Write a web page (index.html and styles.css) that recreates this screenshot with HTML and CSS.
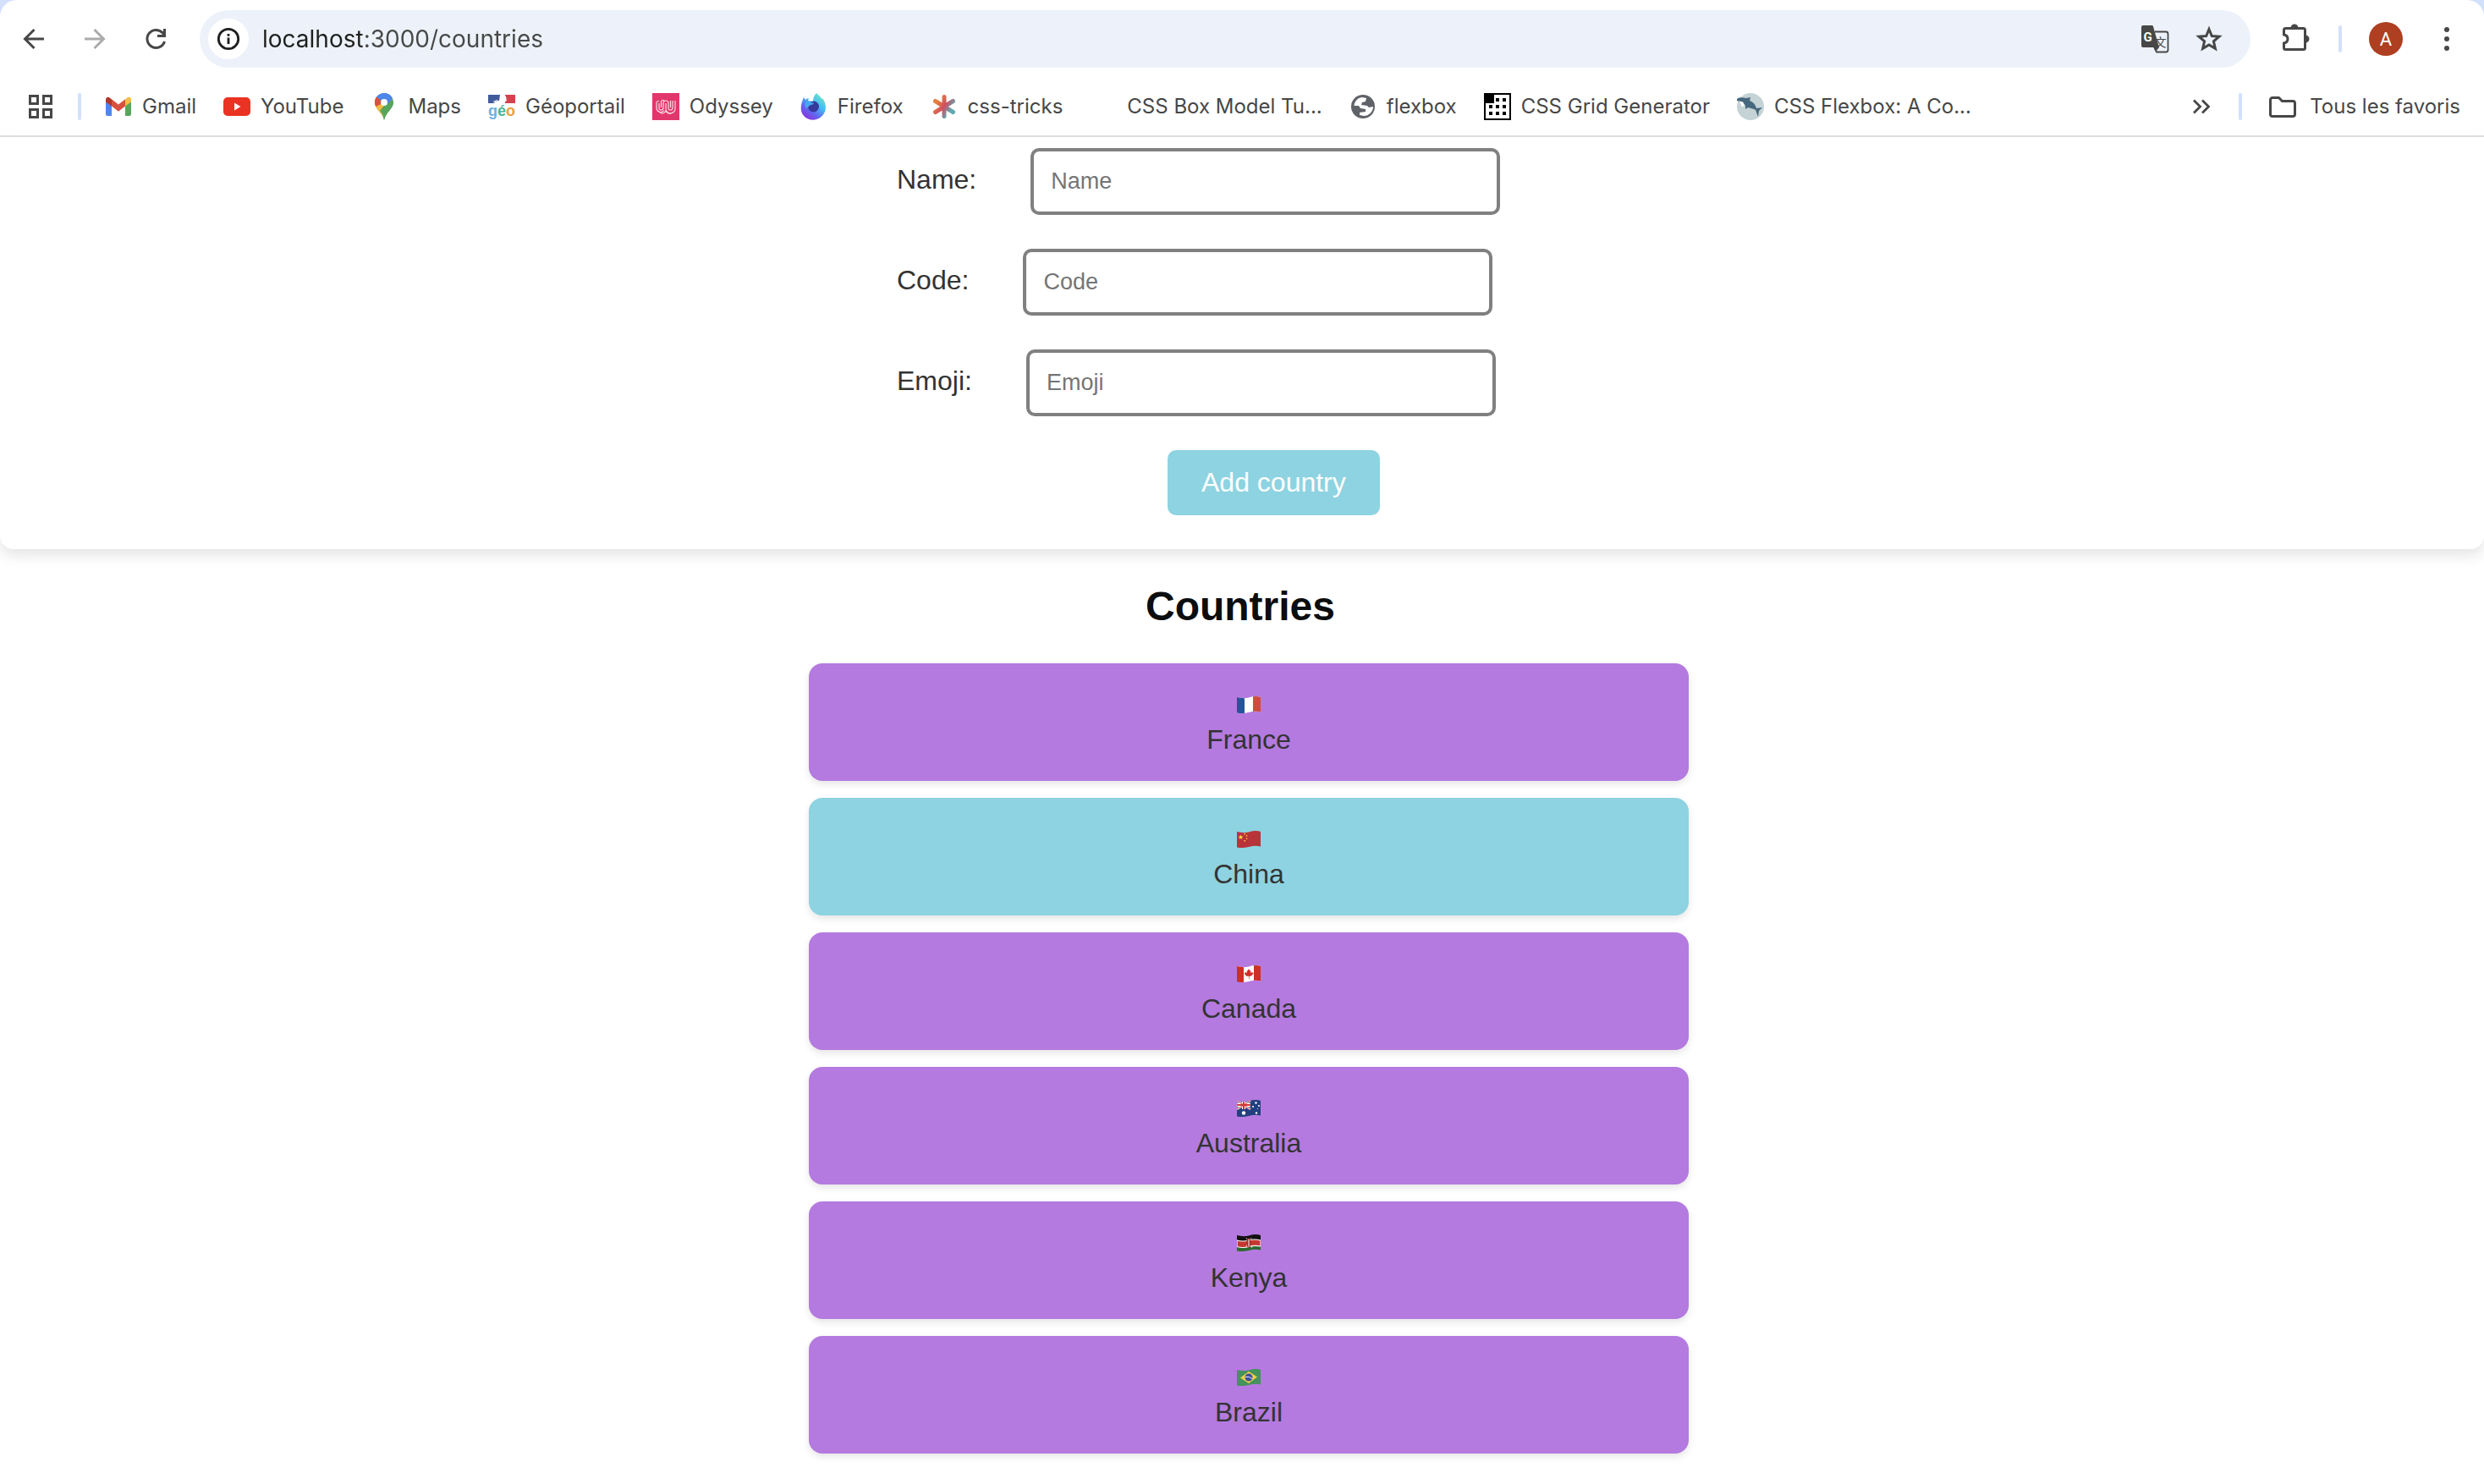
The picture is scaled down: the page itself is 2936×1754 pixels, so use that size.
FILE: index.html
```html
<!DOCTYPE html>
<html lang="fr">
<head>
<meta charset="utf-8">
<title>Countries</title>
<link rel="stylesheet" href="styles.css">
</head>
<body>
<header class="chrome">
  <div class="chrome-inner">
    <div class="toolbar">
      <button class="tool" aria-label="Back"><svg width="40" height="40" viewBox="0 0 40 40" fill="none" stroke="#474747" stroke-width="3"><path d="M32 20H10M20.500 9 9.500 20l11 11"/></svg></button>
      <button class="tool" aria-label="Forward" disabled><svg width="40" height="40" viewBox="0 0 40 40" fill="none" stroke="#ababab" stroke-width="3"><path d="M8 20h22M19.500 9l11 11-11 11"/></svg></button>
      <button class="tool" aria-label="Reload"><svg width="40" height="40" viewBox="0 0 40 40" fill="none" stroke="#474747" stroke-width="3"><path d="M30.500 23A10.500 10.500 0 1 1 28 12.600L30.500 15.500"/><path d="M30.500 8v8.500H22"/></svg></button>
      <div class="omnibox">
        <button class="site-info" aria-label="Site information"><svg width="28" height="28" viewBox="0 0 28 28" fill="none" stroke="#1f1f1f" stroke-width="2.800"><circle cx="14" cy="14" r="11.700"/><path d="M14 12.500v7.500M14 8v2.800"/></svg></button>
        <input class="url" type="text" aria-label="Address" value="localhost:3000/countries">
        <button class="pill-tool" aria-label="Translate"><svg width="34" height="34" viewBox="0 0 34 34"><path d="M17 8.500h13a2.500 2.500 0 0 1 2.500 2.500v19a2.500 2.500 0 0 1-2.500 2.500H19l-3-6" fill="none" stroke="#474747" stroke-width="1.800"/><path d="M3 1h10.500a1.500 1.500 0 0 1 1.500 1.200L22 27l-4 5-2-5H3a2 2 0 0 1-2-2V3a2 2 0 0 1 2-2z" fill="#474747"/><text x="8.500" y="20" class="glyph-g">G</text><text x="23.500" y="26" class="glyph-han">文</text></svg></button>
        <button class="pill-tool" aria-label="Bookmark this page"><svg width="34" height="34" viewBox="0 0 34 34" fill="none" stroke="#474747" stroke-width="3"><path d="M17 5.500l3.300 8 8.700.7-6.600 5.700 2 8.500L17 23.900l-7.400 4.500 2-8.500L5 14.200l8.700-.7z"/></svg></button>
      </div>
      <button class="tool" aria-label="Extensions"><svg width="40" height="40" viewBox="0 0 40 40"><path d="M9.500 7.500h21a2 2 0 0 1 2 2v21a2 2 0 0 1-2 2h-21a2 2 0 0 1-2-2V25c6-1 6-9 0-10V9.500a2 2 0 0 1 2-2z" fill="none" stroke="#474747" stroke-width="3"/><path d="M15.500 7a4.500 4.500 0 0 1 9 0zM33 15.500a4.500 4.500 0 0 1 0 9z" fill="#474747"/></svg></button>
      <span class="divider"></span>
      <button class="avatar" aria-label="Profile">A</button>
      <button class="tool" aria-label="Menu"><svg width="40" height="40" viewBox="0 0 40 40" fill="#474747"><circle cx="20" cy="9" r="3"/><circle cx="20" cy="20" r="3"/><circle cx="20" cy="31" r="3"/></svg></button>
    </div>
    <nav class="bookmarks" aria-label="Bookmarks">
      <button class="apps" aria-label="Applications"><svg width="28" height="28" viewBox="0 0 28 28" fill="none" stroke="#474747" stroke-width="3"><path d="M1.500 1.500h9v9h-9zM17.500 1.500h9v9h-9zM1.500 17.500h9v9h-9zM17.500 17.500h9v9h-9z"/></svg></button>
      <span class="divider"></span>
      <div class="links">
        <a href="#"><svg width="32" height="32" viewBox="0 0 32 32"><path d="M1 9v16a2 2 0 0 0 2 2h5V14z" fill="#4f86ec"/><path d="M31 9v16a2 2 0 0 1-2 2h-5V14z" fill="#58a55c"/><path d="M24 7.500v8l7-5V8c0-3-3-4-5-2.300z" fill="#f2bd42"/><path d="M8 7.500v8l-7-5V8c0-3 3-4 5-2.300z" fill="#b4352b"/><path d="M8 7.300l8 6.200 8-6.200v8.200l-8 6.200-8-6.200z" fill="#d85140"/></svg>Gmail</a>
        <a href="#"><svg width="32" height="32" viewBox="0 0 32 32"><rect y="5" width="32" height="22" rx="5" fill="#ea3323"/><path d="M13 11.500v9l7.500-4.500z" fill="#fff"/></svg>YouTube</a>
        <a href="#"><svg width="32" height="32" viewBox="0 0 32 32"><path d="M16 0c6 0 11 5 11 11 0 8-8.500 10-11 21-1-9-11-12-11-21C5 5 10 0 16 0z" fill="#58a55c"/><path d="M5.300 13C7 21 13 23 15 29l11-20-5-8z" fill="#f2bd42"/><path d="M27 10c0 9-8 11-11 22-.600-5-2.500-8-5-11L23 6z" fill="#58a55c"/><path d="M7 4.500C3.500 9 5 14 6.500 16L16 11z" fill="#d85140"/><path d="M7 4.500C12-2 23-1.500 26 6.500L20 13l-6-3z" fill="#4f86ec"/><circle cx="16" cy="11" r="4" fill="#fff"/></svg>Maps</a>
        <a href="#"><svg width="32" height="32" viewBox="0 0 32 32"><path d="M0 2h14v10H0z" fill="#415a9b"/><path d="M20 2h12v10H19z" fill="#d3434e"/><path d="M14 2h5c3 2 2 4 3 7l-2 1v2H7l1-2 5-1z" fill="#fff"/><path d="M6 10.500l4-2 2 1" fill="none" stroke="#fff"/><text x="0" y="27" class="glyph-geo"><tspan fill="#6fb1e0">g</tspan><tspan fill="#4db39a">é</tspan><tspan fill="#eba13c">o</tspan></text></svg>Géoportail</a>
        <a href="#"><svg width="32" height="32" viewBox="0 0 32 32" fill="none"><path d="M0 0h32v32H0z" fill="#e2376c"/><g stroke="#fbd9e4" stroke-width="1.200"><path d="M8 9.500H7a2 2 0 0 0-2 2V18a5 5 0 0 0 9 2.500"/><path d="M8 12v5.500a2.500 2.500 0 0 0 5 0V12a3 3 0 0 1 6 0v5.500a2.500 2.500 0 0 0 5 0V9"/><path d="M10.500 17v-6a2 2 0 0 1 4-1M16 12v6.500a5.500 5.500 0 0 0 11 0V9M21.500 17V9"/><path d="M9 23.500c3 1 6 0 7-2.500 2 4 7 4 9 1"/></g></svg>Odyssey</a>
        <a href="#"><svg width="32" height="32" viewBox="0 0 32 32"><defs><linearGradient id="fx" x1="1" y1="0" x2=".3" y2="1"><stop offset="0" stop-color="#80f5b5"/><stop offset=".45" stop-color="#43bdf5"/><stop offset=".75" stop-color="#6464f0"/><stop offset="1" stop-color="#8a35dd"/></linearGradient></defs><path d="M19 0c3 3 5 4 6 7l1-1c4 5 5 11 3 16-5 12-21 13-27 2C-1 17 2 10 4 5l2 3c1-1 2-2 4-2l-1 3 6 1c0-4 1-7 4-10z" fill="url(#fx)"/><circle cx="15.500" cy="16" r="6.500" fill="#37389b"/><path d="M6 11c4-2 7 0 10 1-2 3-5 1-6 4l-4 2z" fill="#43aaf2"/></svg>Firefox</a>
        <a href="#"><svg width="32" height="32" viewBox="0 0 32 32"><defs><linearGradient id="ct" gradientUnits="userSpaceOnUse" x1="3" y1="8" x2="29" y2="24"><stop offset=".15" stop-color="#e9803c"/><stop offset=".5" stop-color="#d04e62"/><stop offset=".8" stop-color="#5fa9b5"/></linearGradient></defs><path d="M16 4.500v23M5.500 9.500l21 13M26.500 9.500l-21 13" stroke="url(#ct)" stroke-width="5" stroke-linecap="round"/></svg>css-tricks</a>
        <a href="#"><svg width="32" height="32" viewBox="0 0 32 32"></svg>CSS Box Model Tu...</a>
        <a href="#"><svg width="32" height="32" viewBox="0 0 32 32"><circle cx="16" cy="16" r="14" fill="#5f6368"/><path d="M15 5l5 1-1 4-4 1-1 3 7 1 2 2 5-1c0 6-5 11-11 11l-5-1v-3l7-1v-3l-6-1-2-3H5.500C6 9 11 5 15 5z" fill="#fff"/></svg>flexbox</a>
        <a href="#"><svg width="32" height="32" viewBox="0 0 32 32"><path d="M1 1h30v30H1z" fill="#fff" stroke="#000" stroke-width="2"/><path d="M0 0h12v12H0zM14 6h4v4h-4zM22 6h4v4h-4zM6 14h4v4H6zM14 14h4v4h-4zM22 14h4v4h-4zM6 22h4v4H6zM14 22h4v4h-4zM22 22h4v4h-4z"/></svg>CSS Grid Generator</a>
        <a href="#"><svg width="32" height="32" viewBox="0 0 32 32"><circle cx="16" cy="16" r="16" fill="#c5d3d6"/><path d="M0 7c2-2 6-2 11-1l5-1-1 4c5 2 7 5 8 9l7-1-4 4-1 7-3-8c-4-2-6-2-9-3l-3 2 0-4-3-4-7-2z" fill="#46687f"/><path d="M3 9.500l4 1 2 4-3 2z" fill="#fff"/></svg>CSS Flexbox: A Co...</a>
      </div>
      <button class="more" aria-label="More bookmarks"><svg width="20" height="20" viewBox="0 0 20 20" fill="none" stroke="#474747" stroke-width="2.800"><path d="M1 2.500l7.500 7.500L1 17.500M11 2.500l7.500 7.500-7.500 7.500"/></svg></button>
      <span class="divider"></span>
      <a class="all" href="#"><svg width="32" height="32" viewBox="0 0 32 32" fill="none" stroke="#474747" stroke-width="3"><path d="M4 5.500h7.500l4 4H28a2.500 2.500 0 0 1 2.500 2.500v13a2.500 2.500 0 0 1-2.500 2.500H4A2.500 2.500 0 0 1 1.500 25V8A2.500 2.500 0 0 1 4 5.500z"/></svg>Tous les favoris</a>
    </nav>
  </div>
</header>
<main>
  <section class="panel">
    <form class="form">
      <div class="row"><label for="name">Name:</label><input id="name" type="text" placeholder="Name"></div>
      <div class="row"><label for="code">Code:</label><input id="code" type="text" placeholder="Code"></div>
      <div class="row"><label for="emoji">Emoji:</label><input id="emoji" type="text" placeholder="Emoji"></div>
      <button class="submit" type="submit">Add country</button>
    </form>
  </section>
  <h2>Countries</h2>
  <ul class="countries">
    <li><svg class="flag" width="28" height="20" viewBox="0 0 28 20"><path d="M0 0h28v20H0z" fill="#fff"/><path d="M0 0h9v20H0z" fill="#24549a"/><path d="M19 0h9v20h-9z" fill="#d24b3b"/></svg>France</li>
    <li class="selected"><svg class="flag" width="28" height="20" viewBox="0 0 28 20"><path d="M0 0h28v20H0z" fill="#b8333a"/><path d="M4.500 4.500l.8 2 2.200.1-1.700 1.300.6 2.100-1.900-1.200L2.600 10l.6-2.100-1.700-1.300 2.200-.1z" fill="#f7dc3d"/><path d="M8.500 3h1.500v1.500H8.500zM11 5h1.200v1.500H11zM11 8.500h1.200V10H11zM8.500 11H10v1.500H8.500z" fill="#f7dc3d"/></svg>China</li>
    <li><svg class="flag" width="28" height="20" viewBox="0 0 28 20"><path d="M0 0h28v20H0z" fill="#fff"/><path d="M0 0h8v20H0zM20 0h8v20h-8z" fill="#d02f22"/><path d="M14 4l1.500 2.500 1-.3-.2 3 2-1.500.3 1.300 1.200.5-3.300 3.300h-2l.1 3.500h-.7v-3.500h-2.600L8.500 9.500l1.200-.5.3-1.300 2 1.500-.4-3 1 .3z" fill="#d02f22"/></svg>Canada</li>
    <li><svg class="flag" width="28" height="20" viewBox="0 0 28 20"><path d="M0 0h28v20H0z" fill="#233f7f"/><path d="M0 1l16 10M16 1L0 11" stroke="#fff" stroke-width="2.500"/><path d="M8 0v11M0 6h16" stroke="#fff" stroke-width="4"/><path d="M0 1l16 10M16 1L0 11" stroke="#cf3a3a"/><path d="M8 0v11M0 6h16" stroke="#cf3a3a" stroke-width="2"/><g fill="#fff"><circle cx="8" cy="15.500" r="2.200"/><circle cx="22.500" cy="3.500" r="1.200"/><circle cx="19" cy="8" r="1.100"/><circle cx="26" cy="7" r="1.100"/><circle cx="23" cy="15.500" r="1.200"/><circle cx="24.500" cy="10.500" r=".6"/></g></svg>Australia</li>
    <li><svg class="flag" width="28" height="20" viewBox="0 0 28 20"><path d="M0 0h28v8H0z" fill="#111"/><path d="M0 14h28v6H0z" fill="#2c6b2f"/><path d="M0 7q7 2 14 0t14 0v7q-7-1.500-14 .5T0 14.500z" fill="#c5372f" stroke="#fff" stroke-width="1.200"/><path d="M11 4l7 12M17 4l-7 12" stroke="#ddd" stroke-width=".8"/><ellipse cx="14" cy="10" rx="2.600" ry="5.500" fill="#a82c27"/><path d="M14 5.500v9" stroke="#fff"/></svg>Kenya</li>
    <li><svg class="flag" width="28" height="20" viewBox="0 0 28 20"><path d="M0 0h28v20H0z" fill="#43935a"/><path d="M4 10.500L14 3l10 6.500L14 17z" fill="#f3cf45"/><circle cx="14" cy="10" r="4.500" fill="#3f4fa0"/><path d="M9.800 9.500q5-1 8.300 2" fill="none" stroke="#dfe5ee"/></svg>Brazil</li>
  </ul>
</main>
</body>
</html>
```
FILE: styles.css
```css
* { box-sizing: border-box; }

body {
  margin: 0;
  background: #fff;
  color: #333;
  font-family: "Liberation Sans", Arial, sans-serif;
  font-size: 32px;
  line-height: 37px;
}

button {
  border: 0;
  padding: 0;
  background: none;
  font-family: inherit;
}

svg { display: block; flex: none; }

/* Browser bar */
.chrome { background: #d3e0fc; }

.chrome-inner {
  display: flex;
  flex-direction: column;
  gap: 12px;
  padding-top: 12px;
  border-bottom: 2px solid #e0e0e0;
  border-radius: 20px 20px 0 0;
  background: #fff;
  color: #474747;
  font-family: Inter, sans-serif;
  font-size: 24px;
  line-height: 32px;
}

.toolbar {
  display: flex;
  align-items: center;
  gap: 32px;
  padding: 0 24px 0 20px;
}

.omnibox {
  display: flex;
  flex: 1;
  align-items: center;
  height: 68px;
  padding: 0 32px 0 10px;
  border-radius: 34px;
  background: #edf2fa;
}

.site-info {
  display: grid;
  place-items: center;
  width: 48px;
  height: 48px;
  border-radius: 50%;
  background: #fff;
}

.url {
  flex: 1;
  min-width: 0;
  margin-left: 16px;
  padding: 0;
  border: 0;
  outline: 0;
  background: linear-gradient(90deg, #1f1f1f 118px, #474747 118px);
  background-clip: text;
  color: transparent;
  font-family: Inter, sans-serif;
  font-size: 28px;
  line-height: 40px;
}

.pill-tool + .pill-tool { margin-left: 30px; }

.divider {
  width: 4px;
  height: 32px;
  border-radius: 2px;
  background: #d3e0fc;
}

.avatar {
  width: 40px;
  height: 40px;
  border-radius: 50%;
  background: #ae3f20;
  color: #fff;
  font-family: Roboto, sans-serif;
  font-size: 22px;
}

.bookmarks {
  display: flex;
  align-items: center;
  height: 68px;
  padding: 0 28px 0 34px;
}

.bookmarks a {
  display: flex;
  align-items: center;
  gap: 12px;
  color: inherit;
  text-decoration: none;
  white-space: nowrap;
}

.apps { margin-right: 30px; }
.links { display: flex; flex: 1; gap: 32px; margin-left: 28px; }
.more { margin-right: 34px; }
.bookmarks .all { gap: 16px; margin-left: 32px; }

.glyph-g { fill: #fff; font: bold 15px Roboto, sans-serif; text-anchor: middle; }
.glyph-han { fill: #474747; font: 14px "Noto Sans CJK SC", sans-serif; text-anchor: middle; }
.glyph-geo { font: bold 18px "Liberation Sans", sans-serif; }

/* Country form */
.panel {
  padding: 13px 40px 40px;
  border-radius: 0 0 16px 16px;
  box-shadow: 0 8px 16px rgba(0, 0, 0, 0.1);
}

.form {
  display: flex;
  flex-direction: column;
  align-items: flex-start;
  gap: 40px;
  max-width: 816px;
  margin: 0 auto;
}

.row {
  display: flex;
  align-items: baseline;
  gap: 64px;
}

.row input {
  width: 555px;
  height: 79px;
  padding: 20px;
  border: 4px solid #808080;
  border-radius: 10px;
  background: #fff;
  font-family: inherit;
  font-size: 27px;
}

.row input::placeholder { color: #757575; }

.submit {
  margin-left: 320px;
  padding: 20px 40px;
  border-radius: 10px;
  background: #8dd3e1;
  color: #fff;
  font-size: 32px;
  line-height: 37px;
}

/* Country list */
h2 {
  margin: 40px 0;
  padding-right: 4px;
  color: #0b0d0e;
  font-size: 48px;
  line-height: 55px;
  text-align: center;
}

.countries {
  display: flex;
  flex-direction: column;
  gap: 20px;
  max-width: 1056px;
  margin: 0 auto;
  padding: 0 0 36px 16px;
  list-style: none;
}

.countries li {
  display: flex;
  flex-direction: column;
  align-items: center;
  padding: 30px;
  border-radius: 16px;
  background: #b47adf;
  box-shadow: 0 4px 8px rgba(0, 0, 0, 0.1);
}

.countries .selected { background: #8dd3e1; }

.flag {
  margin: 9px 0 13px;
  clip-path: path("M0 1Q7 3 14 1.500Q22-1 28 1V18.500Q21 17 14 19Q6 21 0 19.500Z");
}
```
